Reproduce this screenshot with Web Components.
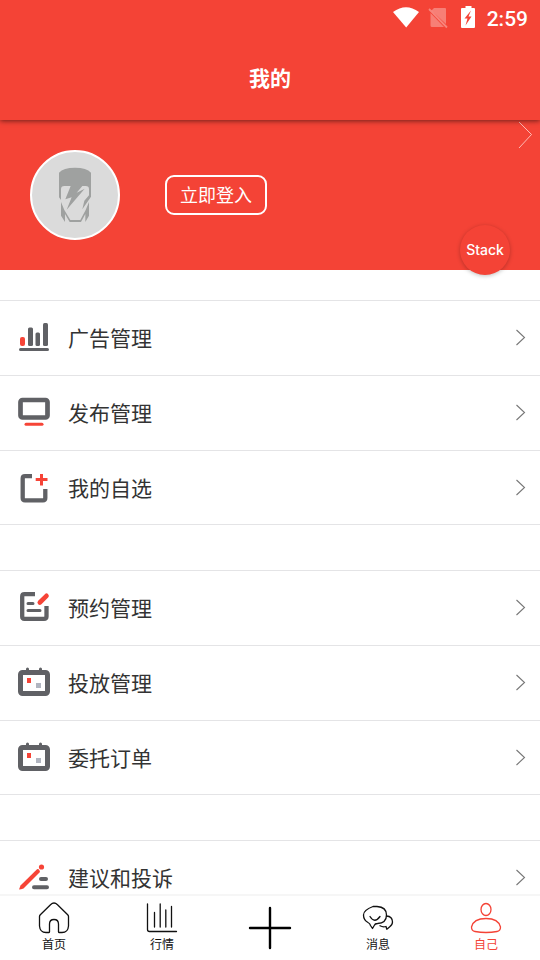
<!DOCTYPE html>
<html lang="zh-CN">
<head>
<meta charset="utf-8">
<meta name="viewport" content="width=device-width, initial-scale=1">
<title>我的</title>
<style>
:root{--brand:#f44336;--ink:#333;--line:#e4e4e6}
body{margin:0;background:#fff;font-family:"Noto Sans CJK SC",sans-serif;color:var(--ink)}
</style>
</head>
<body>
<my-page></my-page>
<script>
const define = (name, html, setup) => {
  const template = document.createElement('template');
  template.innerHTML = html;
  customElements.define(name, class extends HTMLElement {
    constructor() {
      super();
      this.attachShadow({ mode: 'open' }).append(template.content.cloneNode(true));
    }
    connectedCallback() { if (setup) setup(this, this.shadowRoot); }
  });
};

const calendar = `<path fill="none" stroke="#606165" stroke-width="3" stroke-linecap="round" d="M9.500 2V6M22.500 2V6"/>
  <rect x="2.500" y="5.500" width="27" height="21" rx="2" fill="none" stroke="#606165" stroke-width="5"/>
  <path fill="#f64437" d="M9 11h4v5H9z"/><path fill="#b1b5c0" d="M18 16h5v5h-5z"/>`;

const icons = {
  ads: `<rect x="2" y="15" width="5" height="9" rx="2" fill="#f64437"/>
    <g fill="#606165"><rect x="10" y="5.500" width="5" height="18.500" rx="1.500"/><rect x="17.500" y="10.500" width="4.500" height="13.500" rx="1.500"/><rect x="25" y="1" width="5" height="23" rx="1.500"/><rect x="1" y="26" width="30" height="3" rx="1.500"/></g>`,
  publish: `<rect x="2.500" y="3" width="27" height="17.500" rx="2" fill="none" stroke="#606165" stroke-width="4.700"/>
    <rect x="6.500" y="25.700" width="19" height="3" rx="1.500" fill="#f64437"/>`,
  favorite: `<path fill="none" stroke="#606165" stroke-width="4.300" d="M14 4.200H7Q4.700 4.200 4.700 6.500V26Q4.700 28.300 7 28.300H25Q27.300 28.300 27.300 26V17"/>
    <path fill="none" stroke="#f64437" stroke-width="3" d="M23.500 2V13.500M17.700 7.600H29.500"/>`,
  reserve: `<path fill="none" stroke="#606165" stroke-width="4.300" d="M17 2.200H6.500Q4.200 2.200 4.200 4.500V24.500Q4.200 26.800 6.500 26.800H26Q28.500 26.800 28.500 24.500V14"/>
    <path fill="none" stroke="#606165" stroke-width="3" stroke-linecap="round" d="M10 11.500H15M10 18.500H22"/>
    <path fill="none" stroke="#f64437" stroke-width="4.600" stroke-linecap="round" d="M21.800 10.500L28.500 3.800"/>`,
  delivery: calendar,
  feedback: `<path fill="#f64437" d="M1 27.500L2.500 23.500 19 7.200Q20.500 6.500 21.500 8.500L22 10 5.500 26.500Q3 27.500 1 27.500Z"/><circle cx="23.500" cy="5" r="2.600" fill="#f64437"/>
    <path fill="none" stroke="#606165" stroke-width="4" stroke-linecap="round" d="M23 17H28M16 25.200H29"/>`
};

const tabs = {
  home: `<path d="M11 30.500H8Q2 30.500 1.500 24V14.500Q1.500 13.500 2.300 12.700L12.500 2.700Q16 -.700 19.500 2.700L29.700 12.700Q30.500 13.500 30.500 14.500V24Q30 30.500 24 30.500H21Q20.500 30.500 20.500 30V22Q20.500 17.500 16 17.500T11.500 22V30Q11.500 30.500 11 30.500Z"/>`,
  market: `<path d="M1.500 2V27.500Q1.500 29.500 3.500 29.500H30.500M8.500 10.500V25M14.200 2V25M19.800 8V25M25.500 4.500V25"/>`,
  message: `<path d="M11 4.500H15Q24.500 5 24.500 13T15.500 21.500Q13 21.500 12.200 23.500L10.500 26.500 8.500 23.500Q8 21.500 6 20.500Q1.500 18 1.500 13T11 4.500Z"/><path d="M8 14.500Q12.500 22 18 14.500M24.500 14Q30.500 14.500 30.500 20Q30.500 23 27.500 25L24.800 27.200 24 24.500Q21 25.500 18 23.800"/>`,
  mine: `<ellipse cx="16" cy="7.500" rx="5" ry="6"/><path d="M5 29.500Q1.500 29 1.500 25Q3.500 16.500 16 16.500T30.500 25Q30.500 29 27 29.500Q16 31.500 5 29.500Z"/>`
};

define('status-bar', `
<style>
:host{display:flex;align-items:center;justify-content:flex-end;height:36px;padding:0 12px;color:#fff;font:500 21px/36px Roboto,sans-serif}
svg{display:block;flex:none}
span{margin-left:10px;padding-top:2px}
</style>
<svg width="84" height="36" viewBox="0 0 84 36" aria-hidden="true">
  <path fill="#fff" d="M0 12Q13 2.500 26 12L13.200 27.500Z"/>
  <g opacity=".32"><path fill="#fff" d="M41 8H52Q53 8 53 9V24L38.500 10.500ZM37.500 13L51 27H39Q37.500 27 37.500 25.500Z"/></g>
  <path fill="none" stroke="#fff" stroke-opacity=".35" stroke-width="1.800" d="M36 9L54 27.500"/>
  <path fill="#fff" fill-rule="evenodd" d="M69 8H72.500V6H78.500V8H81Q82 8 82 9V27Q82 28 81 28H69Q68 28 68 27V9Q68 8 69 8ZM78 10.500L71.500 18.500H74.500L72.500 25.500 78.500 16.500H75.500Z"/>
</svg>
<span>2:59</span>`);

define('app-header', `
<style>
:host{display:block;position:relative;z-index:1;background:var(--brand);box-shadow:0 1px 5px rgba(0,0,0,.55)}
h1{box-sizing:border-box;margin:0;height:84px;color:#fff;font-size:21px;font-weight:700;line-height:82px;text-align:center}
</style>
<status-bar></status-bar>
<h1><slot></slot></h1>`);

define('profile-banner', `
<style>
:host{display:flex;align-items:center;position:relative;height:150px;padding:0 30px;background:var(--brand)}
.avatar{box-sizing:border-box;width:90px;height:90px;border:2px solid #fff;border-radius:50%;background:#dbdbdb}
.avatar svg{display:block}
.login{box-sizing:border-box;height:40px;margin-left:45px;padding:0 13px 2px;border:2px solid #fff;border-radius:9px;background:none;color:#fff;font:18px/34px "Noto Sans CJK SC",sans-serif}
.more{position:absolute;right:7px;top:0}
.more svg{display:block}
.stack{position:absolute;right:30px;bottom:-5px;width:50px;height:50px;padding:0;border:0;border-radius:50%;background:var(--brand);color:#fff;font:500 14px/50px Inter,sans-serif;box-shadow:0 1px 4px rgba(0,0,0,.25)}
</style>
<div class="avatar"><svg width="86" height="86" viewBox="-54 -24 258 258" aria-hidden="true">
  <g fill="#9fa1a0">
    <path d="M27 38Q40 23 75 23T123 38V110L97 148 103 122 117 106V88Q117 78 107 78H97L80 98 104 86 50 149 65 112 46 118 62 78H43Q33 78 33 88V120L27 112Z"/>
    <path d="M33 126L43 150 61 180H91L107 150 117 126V167L106 186V162L93 186H59L45 162V186L33 167Z"/>
  </g>
</svg></div>
<button class="login" type="button">立即登入</button>
<a class="more" href="#profile" aria-label="个人资料"><svg width="15" height="30" viewBox="0 0 15 30"><path fill="none" stroke="#ffd8d4" stroke-width=".8" d="M1 2L13.500 14.500 1 28"/></svg></a>
<button class="stack" type="button">Stack</button>`);

define('menu-group', `
<style>
:host{display:block;margin-bottom:45px;border-bottom:1px solid var(--line)}
</style>
<slot></slot>`);

define('menu-row', `
<style>
:host{display:block}
:host(:last-child) a{height:74px}
a{box-sizing:border-box;display:flex;align-items:flex-start;gap:18px;height:75px;padding:21px 14px 0 18px;border-top:1px solid var(--line);color:var(--ink);font-size:21px;line-height:30px;text-decoration:none}
svg{display:block;flex:none}
span{flex:1}
</style>
<a><svg class="icon" width="32" height="32" viewBox="0 0 32 32" aria-hidden="true"></svg><span><slot></slot></span>
<svg width="10" height="32" viewBox="0 0 10 32" aria-hidden="true"><path fill="none" stroke="#777" stroke-width="1.100" d="M.5 8L8.500 15.500 .5 23"/></svg></a>`,
(host, root) => {
  root.querySelector('a').href = '#' + host.getAttribute('to');
  root.querySelector('.icon').innerHTML = icons[host.getAttribute('icon')];
});

define('tab-item', `
<style>
:host{display:block;flex:1}
a{display:flex;flex-direction:column;align-items:center;color:#111;font-size:12px;line-height:20px;text-decoration:none}
:host([active]) a{color:var(--brand)}
svg{display:block;fill:none;stroke:currentColor;stroke-width:1.300;stroke-linecap:round;stroke-linejoin:round}
</style>
<a><svg width="32" height="32" viewBox="0 0 32 32" aria-hidden="true"></svg><span><slot></slot></span></a>`,
(host, root) => {
  const icon = host.getAttribute('icon');
  root.querySelector('a').href = '#' + icon;
  root.querySelector('svg').innerHTML = tabs[icon];
});

define('tab-bar', `
<style>
:host{box-sizing:border-box;display:flex;height:66px;padding-top:6px;border-top:2px solid #f6f6f6;background:#fff}
button{flex:1;display:flex;justify-content:center;padding:4px 0 0;border:0;background:none}
svg{display:block}
</style>
<tab-item icon="home">首页</tab-item>
<tab-item icon="market">行情</tab-item>
<button type="button" aria-label="发布"><svg width="44" height="44" viewBox="0 0 44 44"><path fill="none" stroke="#000" stroke-width="2.400" stroke-linecap="round" d="M22 2V42M2 22H42"/></svg></button>
<tab-item icon="message">消息</tab-item>
<tab-item icon="mine" active>自己</tab-item>`);

define('my-page', `
<style>
:host{display:flex;flex-direction:column;height:100vh}
app-header,profile-banner,tab-bar{flex:none}
main{flex:1;min-height:0;overflow:hidden;padding-top:30px}
</style>
<app-header>我的</app-header>
<profile-banner></profile-banner>
<main>
  <menu-group>
    <menu-row icon="ads" to="ads">广告管理</menu-row>
    <menu-row icon="publish" to="publish">发布管理</menu-row>
    <menu-row icon="favorite" to="favorites">我的自选</menu-row>
  </menu-group>
  <menu-group>
    <menu-row icon="reserve" to="reservations">预约管理</menu-row>
    <menu-row icon="delivery" to="delivery">投放管理</menu-row>
    <menu-row icon="delivery" to="orders">委托订单</menu-row>
  </menu-group>
  <menu-group>
    <menu-row icon="feedback" to="feedback">建议和投诉</menu-row>
  </menu-group>
</main>
<tab-bar></tab-bar>`);
</script>
</body>
</html>
